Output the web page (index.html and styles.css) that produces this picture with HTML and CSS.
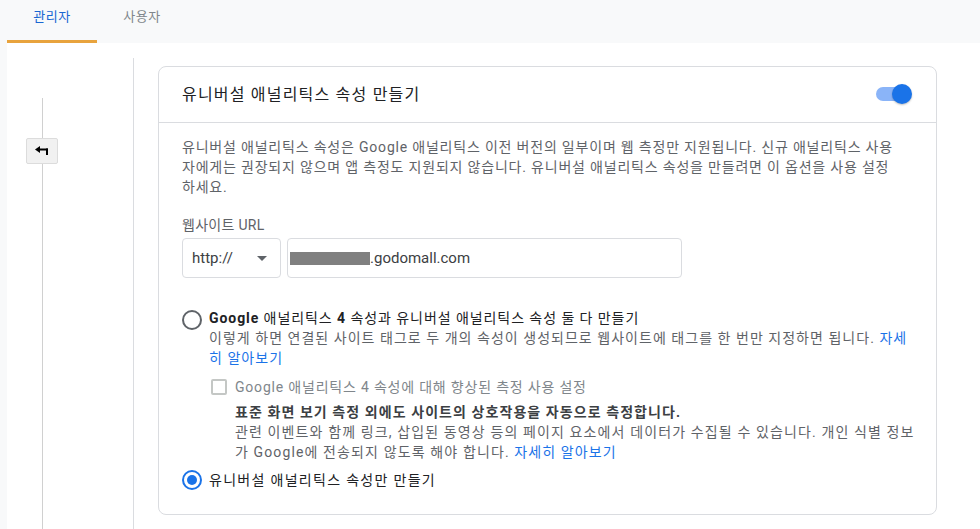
FILE: index.html
```html
<!DOCTYPE html>
<html lang="ko">
<head>
<meta charset="utf-8">
<title>속성 만들기</title>
<link rel="stylesheet" href="styles.css">
</head>
<body>
<header class="tabs">
  <div class="tab active">관리자</div>
  <div class="tab">사용자</div>
</header>
<main class="main">
  <aside class="side">
    <div class="rail">
      <div class="seg seg-top"></div>
      <button class="back" type="button" aria-label="뒤로">
        <svg width="14" height="9" viewBox="0 0 14 9"><path d="M0 3.5 L5 0 L5 7 Z" fill="#000"/><rect x="4" y="2.5" width="9" height="2" fill="#000"/><rect x="11" y="2.5" width="2" height="6.5" fill="#000"/></svg>
      </button>
      <div class="seg seg-fill"></div>
    </div>
  </aside>
  <section class="card">
    <div class="card-head">
      <h2 class="card-title">유니버설 애널리틱스 속성 만들기</h2>
      <div class="toggle"><span class="track"></span><span class="thumb"></span></div>
    </div>
    <div class="card-body">
      <p class="intro">유니버설 애널리틱스 속성은 Google 애널리틱스 이전 버전의 일부이며 웹 측정만 지원됩니다. 신규 애널리틱스 사용<br>자에게는 권장되지 않으며 앱 측정도 지원되지 않습니다. 유니버설 애널리틱스 속성을 만들려면 이 옵션을 사용 설정<br>하세요.</p>
      <div class="field-label">웹사이트 URL</div>
      <div class="url-row">
        <div class="select"><span>http://</span><span class="caret"></span></div>
        <div class="input"><span class="redact"></span><span>.godomall.com</span></div>
      </div>
      <div class="option">
        <span class="radio"></span>
        <span class="option-label label-both"><b>Google</b> 애널리틱스 <b>4</b> 속성과 유니버설 애널리틱스 속성 둘 다 만들기</span>
      </div>
      <p class="option-desc">이렇게 하면 연결된 사이트 태그로 두 개의 속성이 생성되므로 웹사이트에 태그를 한 번만 지정하면 됩니다. <a class="link" href="#">자세<br>히 알아보기</a></p>
      <div class="check-row">
        <span class="checkbox"></span>
        <span class="check-label">Google 애널리틱스 4 속성에 대해 향상된 측정 사용 설정</span>
      </div>
      <div class="sub">
        <p class="sub-strong">표준 화면 보기 측정 외에도 사이트의 상호작용을 자동으로 측정합니다.</p>
        <p class="sub-text">관련 이벤트와 함께 링크, 삽입된 동영상 등의 페이지 요소에서 데이터가 수집될 수 있습니다. 개인 식별 정보<br>가 Google에 전송되지 않도록 해야 합니다. <a class="link" href="#">자세히 알아보기</a></p>
      </div>
      <div class="option option-last">
        <span class="radio checked"></span>
        <span class="option-label label-ua">유니버설 애널리틱스 속성만 만들기</span>
      </div>
    </div>
  </section>
</main>
</body>
</html>
```
FILE: styles.css
```css
* { box-sizing: border-box; }
html, body { margin: 0; padding: 0; }
body {
  background: #f8f9fa;
  font-family: Roboto, "Noto Sans CJK KR", sans-serif;
  font-size: 14px;
  line-height: 20px;
  color: #5f6368;
  height: 529px;
  overflow: hidden;
}
p { margin: 0; }

.tabs {
  display: flex;
  height: 43px;
  padding-left: 7px;
  background: #f8f9fa;
}
.tab {
  width: 90px;
  text-align: center;
  font-size: 13px;
  letter-spacing: 0.5px;
  padding-top: 7px;
  color: #80868b;
  border-bottom: 3px solid transparent;
}
.tab.active {
  color: #1967d2;
  border-bottom-color: #e8a33d;
}

.main {
  display: flex;
  margin-left: 7px;
  height: 486px;
  background: #fff;
  padding-top: 15px;
}
.side {
  width: 127px;
  flex: none;
  border-right: 1px solid #dadce0;
  padding-top: 40px;
}
.rail {
  display: flex;
  flex-direction: column;
  align-items: center;
  width: 32px;
  height: 100%;
  margin-left: 19px;
}
.seg { width: 1px; background: #d0d0d0; }
.seg-top { height: 40px; }
.seg-fill { flex: 1; }
.back {
  width: 32px;
  height: 26px;
  flex: none;
  margin: 0;
  padding: 0;
  border: 1px solid #dcdcdc;
  border-radius: 2px;
  background: #f1f1f1;
  display: flex;
  align-items: center;
  justify-content: center;
}
.back svg { display: block; margin-top: -1px; }

.card {
  width: 779px;
  height: 449px;
  margin: 8px 0 0 24px;
  border: 1px solid #dadce0;
  border-radius: 8px;
  flex: none;
}
.card-head {
  display: flex;
  align-items: center;
  justify-content: space-between;
  height: 56px;
  padding: 0 24px 0 23px;
  border-bottom: 1px solid #dadce0;
}
.card-title {
  margin: 0;
  font-size: 16px;
  font-weight: 400;
  letter-spacing: 1.2px;
  color: #202124;
}
.toggle {
  position: relative;
  width: 36px;
  height: 20px;
  margin-top: -1px;
}
.track {
  position: absolute;
  left: 0;
  top: 3px;
  width: 32px;
  height: 14px;
  border-radius: 7px;
  background: #8ab4f8;
}
.thumb {
  position: absolute;
  right: 0;
  top: 0;
  width: 20px;
  height: 20px;
  border-radius: 50%;
  background: #1a73e8;
  box-shadow: 0 1px 2px rgba(0,0,0,0.25);
}

.card-body {
  padding: 14px 4px 0 23px;
  letter-spacing: 0.3px;
}
.intro { letter-spacing: 0.8px; }
.field-label {
  margin-top: 18px;
  color: #5f6368;
}
.url-row {
  display: flex;
  gap: 6px;
  margin-top: 3px;
}
.select, .input {
  height: 40px;
  border: 1px solid #dadce0;
  border-radius: 4px;
  display: flex;
  align-items: center;
  font-size: 15px;
  color: #3c4043;
  letter-spacing: 0;
}
.select {
  width: 99px;
  justify-content: space-between;
  padding: 0 13px 0 9px;
}
.caret {
  width: 0;
  height: 0;
  border-left: 5px solid transparent;
  border-right: 5px solid transparent;
  border-top: 5px solid #5f6368;
}
.input {
  width: 395px;
  padding-left: 2px;
}
.redact {
  width: 80px;
  height: 13px;
  background: #808080;
}

.option {
  display: flex;
  align-items: flex-start;
  height: 20px;
  margin-top: 30px;
  color: #202124;
}
.option b { font-weight: 700; color: #202124; }
.label-both { letter-spacing: 0.93px; }
.label-ua { letter-spacing: 1.3px; }
.radio {
  width: 20px;
  height: 20px;
  flex: none;
  border: 2px solid #5f6368;
  border-radius: 50%;
  margin-right: 7px;
  margin-top: 2px;
}
.radio.checked {
  border-color: #1a73e8;
  display: flex;
  align-items: center;
  justify-content: center;
  margin-top: 0;
}
.radio.checked::after {
  content: "";
  width: 10px;
  height: 10px;
  border-radius: 50%;
  background: #1a73e8;
}
.option-desc {
  padding-left: 27px;
  color: #5f6368;
  letter-spacing: 1.03px;
}
.link { color: #1a73e8; text-decoration: none; }
.check-row {
  display: flex;
  align-items: center;
  margin-top: 9px;
  padding-left: 29px;
}
.checkbox {
  width: 16px;
  height: 16px;
  border: 2px solid #c4c7c5;
  border-radius: 2px;
  margin-right: 8px;
  flex: none;
}
.check-label { color: #80868b; letter-spacing: 0.8px; }
.sub {
  padding-left: 53px;
  margin-top: 5px;
}
.sub-strong { font-weight: 700; color: #3c4043; letter-spacing: 1.07px; }
.sub-text { letter-spacing: 1.12px; }
.option-last { margin-top: 8px; }
```
